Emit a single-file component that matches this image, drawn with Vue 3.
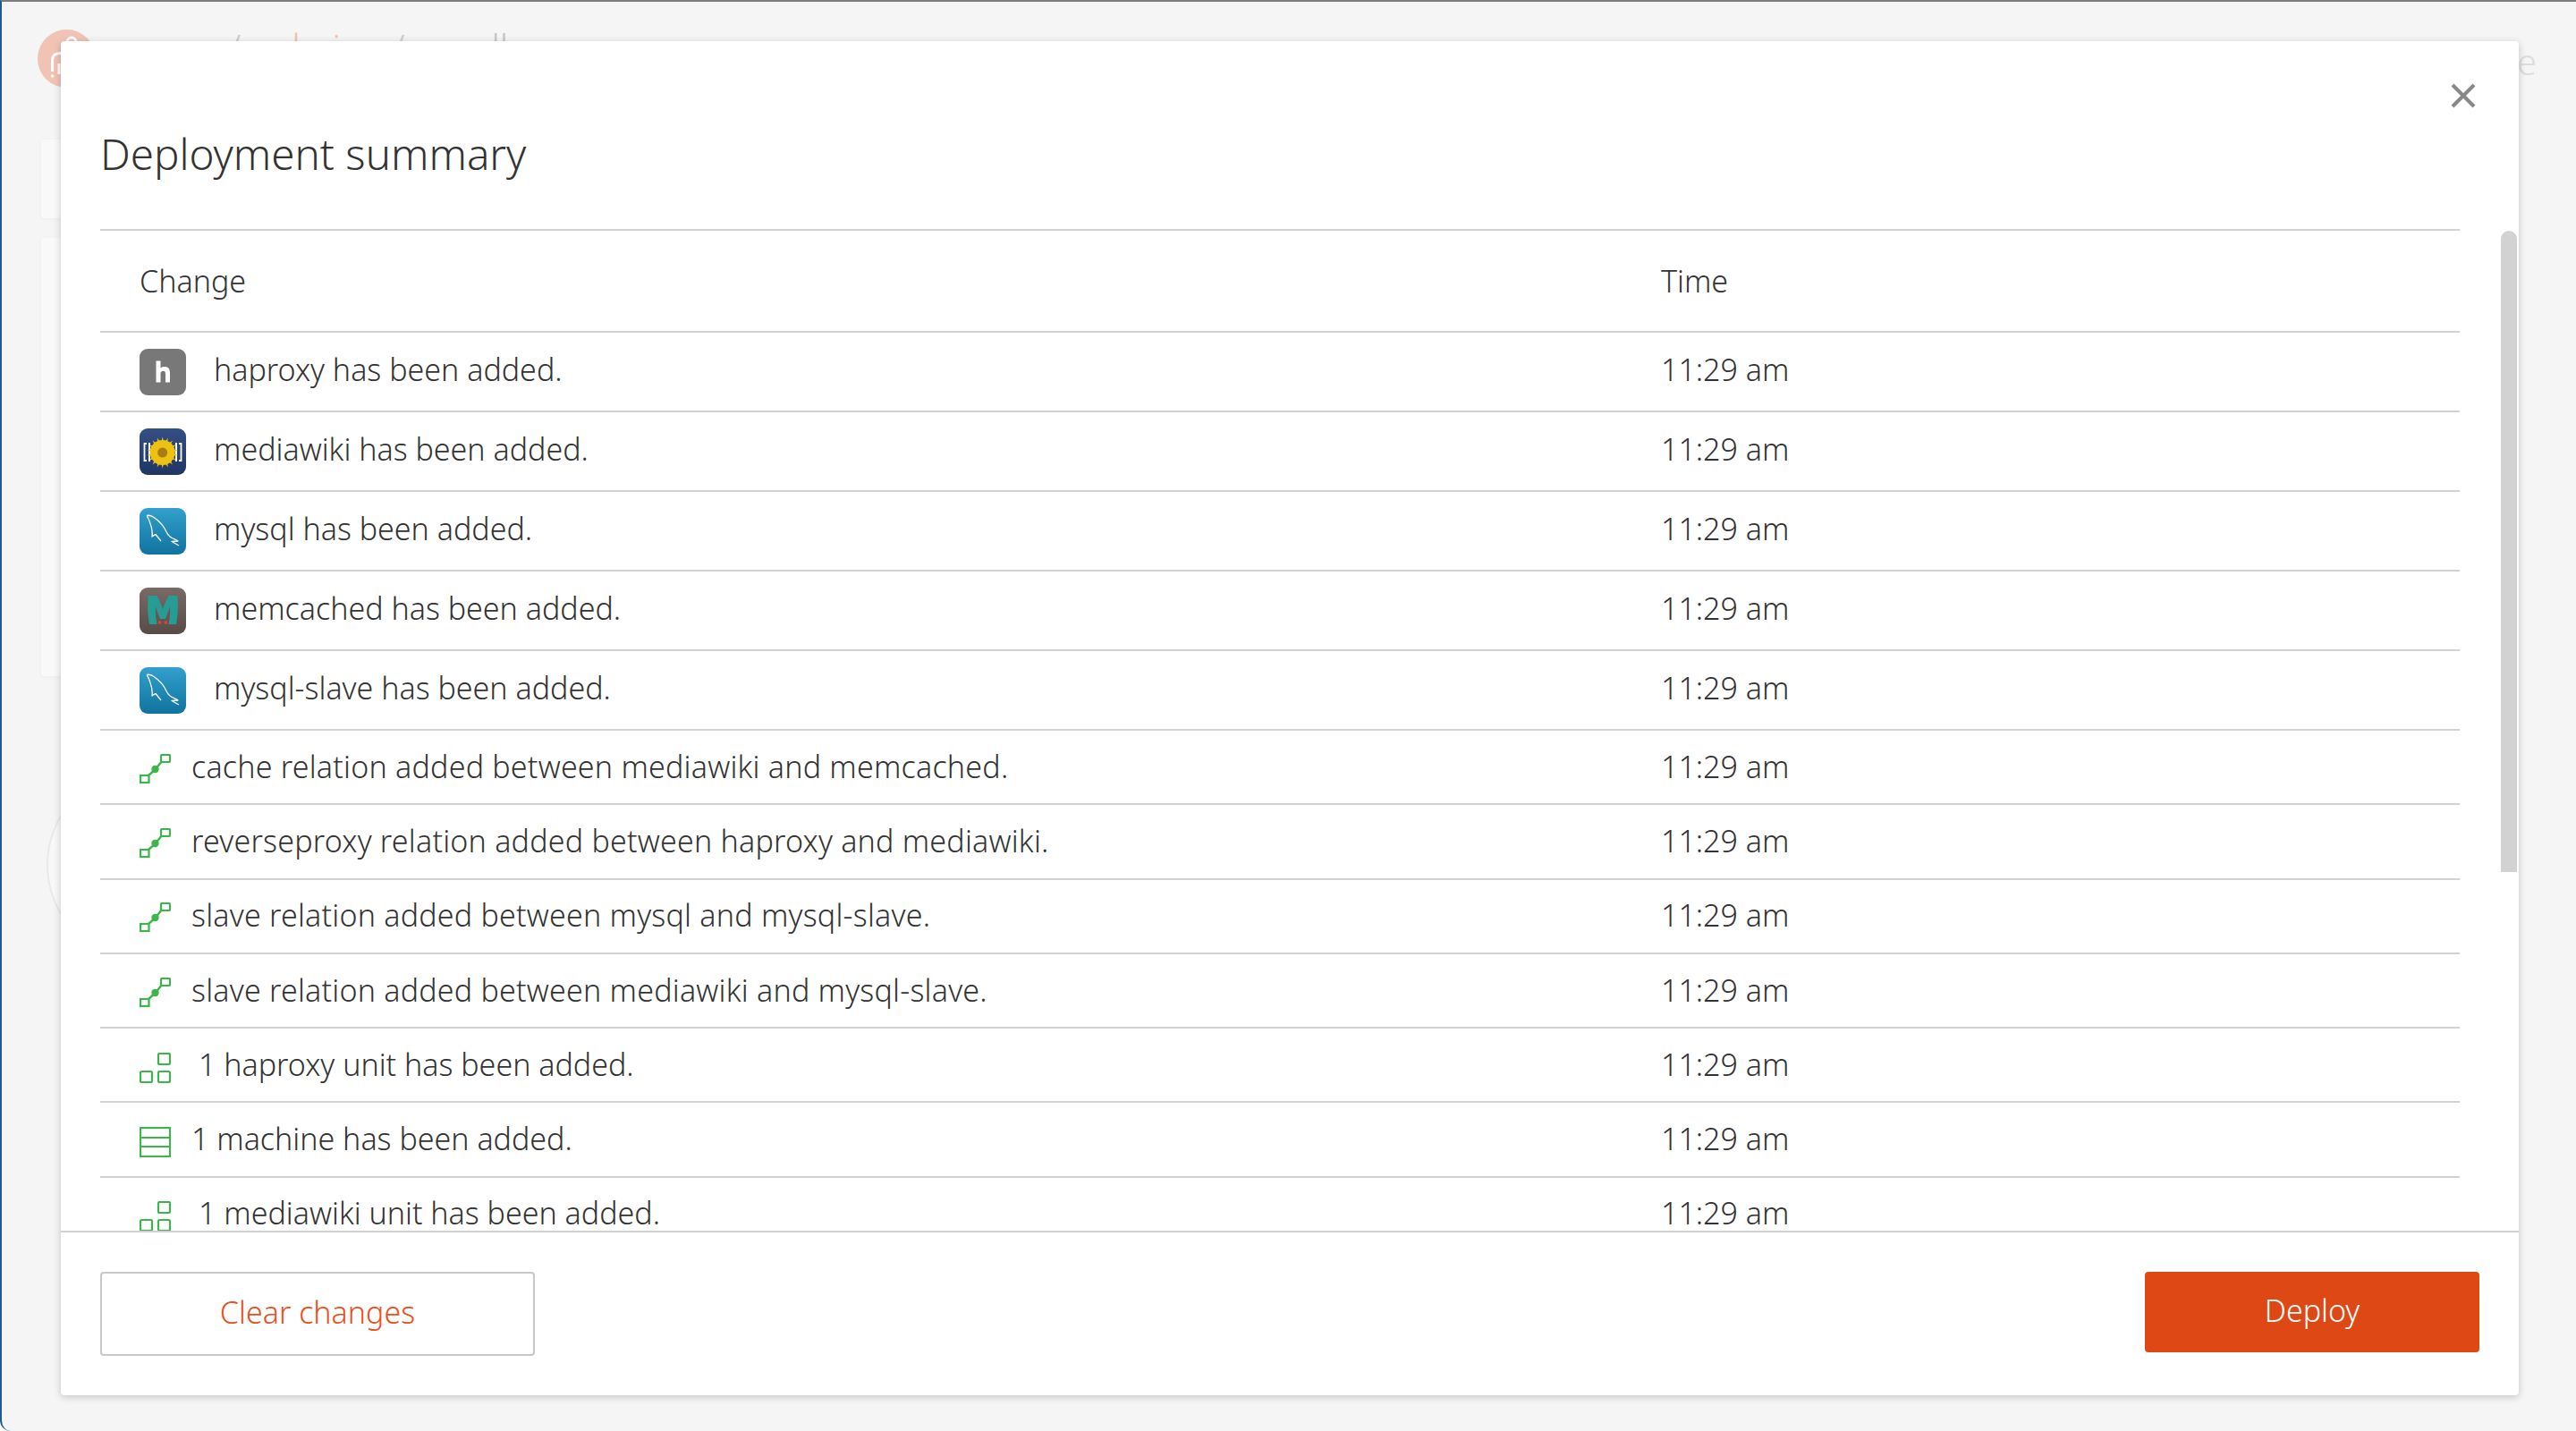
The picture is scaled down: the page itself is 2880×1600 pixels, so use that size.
<script setup>
const serviceRows = [
  { icon: 'haproxy', text: 'haproxy has been added.' },
  { icon: 'mediawiki', text: 'mediawiki has been added.' },
  { icon: 'mysql', text: 'mysql has been added.' },
  { icon: 'memcached', text: 'memcached has been added.' },
  { icon: 'mysql', text: 'mysql-slave has been added.' },
]
const changeRows = [
  { icon: 'relation', text: 'cache relation added between mediawiki and memcached.' },
  { icon: 'relation', text: 'reverseproxy relation added between haproxy and mediawiki.' },
  { icon: 'relation', text: 'slave relation added between mysql and mysql-slave.' },
  { icon: 'relation', text: 'slave relation added between mediawiki and mysql-slave.' },
  { icon: 'unit', text: '1 haproxy unit has been added.' },
  { icon: 'machine', text: '1 machine has been added.' },
  { icon: 'unit', text: '1 mediawiki unit has been added.' },
]
const petals = Array.from({ length: 18 }, (_, i) => i * 20)
</script>

<template>
  <div class="page">
    <div class="backdrop">
      <div class="top-bar">
        <svg class="logo" width="65" height="65" viewBox="0 0 65 65">
          <circle cx="32.5" cy="32.5" r="32.5" fill="#f0c3b5"/>
          <circle cx="38" cy="14" r="5" fill="none" stroke="#fff" stroke-width="3"/>
          <path d="M16.5 47 V34 C16.5 29 20 26.500 26 26.500 M24 38 V50" fill="none" stroke="#fff" stroke-width="3"/>
          <circle cx="16.500" cy="52" r="1.800" fill="#fff"/>
        </svg>
        <div class="crumbs">
          <span class="pink">www</span><span class="slash">/</span><span class="pink">admin</span><span class="slash">/</span><span class="grey">small</span>
        </div>
        <div class="top-right">More</div>
      </div>
      <div class="side-card small"></div>
      <div class="side-card large"></div>
      <div class="side-round"></div>
    </div>

    <section class="modal">
      <button class="close" aria-label="Close">
        <svg width="28" height="28" viewBox="0 0 28 28"><path d="M2 2 L26 26 M26 2 L2 26" stroke="#888" stroke-width="4" fill="none"/></svg>
      </button>
      <h2 class="title">Deployment summary</h2>
      <div class="body">
        <div class="table">
          <div class="row head"><div class="cell">Change</div><div class="time">Time</div></div>
          <div v-for="r in serviceRows" :key="r.text" class="row service">
            <div class="cell">
              <svg class="svc" viewBox="0 0 52 52" width="52" height="52">
                <defs>
                  <linearGradient id="gm" x1="0" y1="0" x2="0" y2="1"><stop offset="0" stop-color="#344f87"/><stop offset="1" stop-color="#1f3564"/></linearGradient>
                  <linearGradient id="gs" x1="0" y1="0" x2="0" y2="1"><stop offset="0" stop-color="#32a0cd"/><stop offset="1" stop-color="#10739f"/></linearGradient>
                  <linearGradient id="gc" x1="0" y1="0" x2="0" y2="1"><stop offset="0" stop-color="#7a6a66"/><stop offset="1" stop-color="#574b48"/></linearGradient>
                </defs>
                <template v-if="r.icon === 'haproxy'">
                  <rect width="52" height="52" rx="9" fill="#787878"/>
                  <path d="M18.500 13.500 H23.500 V21.500 C25 20.300 26.500 20 28 20 C32 20 34 22.500 34 27 V37.500 H29 V28 C29 25.800 28.200 24.800 26.500 24.800 C25 24.800 23.500 25.800 23.500 27.500 V37.500 H18.500 Z" fill="#fff"/>
                </template>
                <template v-else-if="r.icon === 'mediawiki'">
                  <rect width="52" height="52" rx="9" fill="url(#gm)"/>
                  <path d="M8 17 H5.500 V36 H8 M44 17 H46.500 V36 H44" stroke="#fff" stroke-width="1.800" fill="none"/>
                  <path d="M12 17 H11 V36 H12 M40 17 H41 V36 H40" stroke="#fff" stroke-width="2" fill="none"/>
                  <g fill="#f1c50f"><path v-for="a in petals" :key="a" d="M22 24 L25.700 9.500 L29.500 24 Z" :transform="`rotate(${a} 25.700 27)`"/></g>
                  <circle cx="25.700" cy="27" r="14" fill="#eec212"/>
                  <circle cx="25.700" cy="27" r="5.500" fill="#a97c14"/>
                </template>
                <template v-else-if="r.icon === 'mysql'">
                  <rect width="52" height="52" rx="9" fill="url(#gs)"/>
                  <path d="M8.300 8.300 C11 8 14 9 16 10.500 C21 14 25 18 27.500 22 C30 26 31 30 34 32 C36.500 34 40 35 43 37 L36 37.500 L44 42 M8.300 8.300 C9 11 11 13 11.500 16 C13 20 15 25 14 32 C15.500 30.500 17 30 18 29.500 C20 32 22 34.500 24 37" stroke="#fff" stroke-width="1.300" fill="none" stroke-linejoin="round"/>
                </template>
                <template v-else>
                  <rect width="52" height="52" rx="9" fill="url(#gc)"/>
                  <path d="M9.700 9 H19.500 C22 14 24.500 19 26 24 C27.500 19 30 14 32.500 9 H42.300 C43.300 20 43 30 41 41 H32.500 C34 33 34.500 27 34 21 C32 27 30.500 31 29 35 H23 C21.500 31 20 27 18 21 C17.500 27 18 33 19.500 41 H11 C9 30 8.700 20 9.700 9 Z" fill="#279c94"/>
                  <circle cx="22.500" cy="39" r="1.900" fill="#d94040"/><circle cx="29.500" cy="39" r="1.900" fill="#d94040"/>
                </template>
              </svg>
              <span class="label">{{ r.text }}</span>
            </div>
            <div class="time lift">11:29 am</div>
          </div>
          <div v-for="r in changeRows" :key="r.text" class="row change">
            <div class="cell">
              <svg v-if="r.icon === 'relation'" class="chg rel" viewBox="0 0 35 34" width="35" height="34">
                <rect x="1" y="24" width="9.500" height="8" fill="none" stroke="#3cb54a" stroke-width="2.200"/>
                <rect x="24" y="1" width="10" height="8" rx="1" fill="none" stroke="#3cb54a" stroke-width="2.200"/>
                <path d="M10 24 L17.500 17.500 L25 8" stroke="#3cb54a" stroke-width="2.400" fill="none"/>
                <circle cx="17.500" cy="17" r="4.200" fill="#3cb54a"/>
              </svg>
              <svg v-else-if="r.icon === 'unit'" class="chg unit" viewBox="0 0 35 34" width="35" height="34">
                <g fill="none" stroke="#3cb54a" stroke-width="2.200">
                  <rect x="21" y="1" width="13" height="12" rx="1.500"/>
                  <rect x="1" y="21" width="13" height="12" rx="1.500"/>
                  <rect x="21" y="21" width="13" height="12" rx="1.500"/>
                </g>
              </svg>
              <svg v-else class="chg mach" viewBox="0 0 35 34" width="35" height="34">
                <g fill="none" stroke="#3cb54a" stroke-width="2.200">
                  <rect x="1" y="1" width="33" height="32"/>
                  <path d="M1 12 H34 M1 22 H34"/>
                </g>
              </svg>
              <span class="label" :class="{ wide: r.icon === 'relation' }">{{ r.text }}</span>
            </div>
            <div class="time lift">11:29 am</div>
          </div>
        </div>
        <div class="scrollbar"></div>
      </div>
      <footer class="footer">
        <button class="btn neutral">Clear changes</button>
        <button class="btn primary">Deploy</button>
      </footer>
    </section>
  </div>
</template>

<style scoped>
.page {
  position: relative;
  width: 2880px;
  height: 1600px;
  box-sizing: border-box;
  overflow: hidden;
  background: #f5f5f5;
  border-top: 2px solid #7d7d7d;
  border-left: 2px solid #23598c;
  border-bottom-left-radius: 12px;
  font-family: "Noto Sans", sans-serif;
  font-weight: 300;
  color: #333;
}
.backdrop { position: absolute; inset: 0; }
.top-bar { display: flex; align-items: center; height: 66px; margin-top: 30px; padding: 0 44px 0 40px; }
.logo { flex: none; }
.crumbs { margin-left: 26px; margin-bottom: 26px; font-size: 40px; display: flex; }
.pink { color: #f0c0b0; }
.grey { color: #c4c4c4; }
.slash { color: #ccc; margin: 0 21px 0 34px; }
.top-right { margin-left: auto; margin-top: 6px; font-size: 40px; color: #ddd; }
.side-card { background: #f9f9f9; margin-left: 44px; width: 60px; border-radius: 4px; box-shadow: 0 1px 4px rgba(0,0,0,.04); }
.side-card.small { height: 88px; margin-top: 58px; }
.side-card.large { height: 490px; margin-top: 22px; }
.side-round { width: 214px; height: 214px; box-sizing: border-box; margin: 104px 0 0 50px; border: 2px solid #e9e9e9; border-radius: 50%; background: #f8f8f8; }

.modal {
  position: absolute;
  left: 66px;
  top: 44px;
  width: 2748px;
  height: 1514px;
  background: #fff;
  border-radius: 4px;
  box-shadow: 0 2px 8px rgba(0,0,0,.2);
  display: flex;
  flex-direction: column;
  overflow: hidden;
}
.close {
  position: absolute;
  right: 48px;
  top: 47px;
  padding: 0;
  border: 0;
  background: none;
  line-height: 0;
}
.title {
  margin: 0;
  height: 210px;
  flex: none;
  box-sizing: border-box;
  padding: 95px 0 0 44px;
  font-size: 47.500px;
  line-height: 62px;
  font-weight: 300;
}
.body { position: relative; flex: 1; min-height: 0; overflow: hidden; }
.table { margin: 0 66px 0 44px; border-top: 2px solid #d2d2d2; }
.row {
  display: flex;
  align-items: center;
  box-sizing: border-box;
  padding-left: 44px;
  border-bottom: 2px solid #d2d2d2;
  font-size: 34px;
}
.row.head { height: 114px; }
.row.service { height: 89px; }
.row.change { height: 83.300px; }
.cell { flex: none; width: 1701px; display: flex; align-items: center; }
.time { flex: none; }
.service .label, .service .lift { padding-bottom: 6px; }
.change .label, .change .lift { padding-bottom: 2px; }
.wide { letter-spacing: .22px; }
.svc { margin-right: 31px; flex: none; }
.chg { flex: none; }
.rel { margin-right: 23px; margin-top: 4px; }
.unit { margin-right: 31px; margin-top: 6px; }
.mach { margin-right: 23px; margin-top: 5px; }
.scrollbar {
  position: absolute;
  left: 2728px;
  top: 2px;
  width: 18px;
  height: 717px;
  background: #d2d2d2;
  border-radius: 9px 9px 0 0;
}
.footer {
  flex: none;
  height: 184px;
  box-sizing: border-box;
  border-top: 2px solid #d2d2d2;
  padding: 44px 44px 0;
  display: flex;
  justify-content: space-between;
  align-items: flex-start;
}
.btn {
  font: inherit;
  font-size: 34px;
  border-radius: 4px;
  cursor: pointer;
  padding: 0 0 4px;
}
.neutral {
  width: 486px;
  height: 94px;
  color: #e9501c;
  background: #fff;
  border: 2px solid #c8c8c8;
}
.primary {
  width: 374px;
  height: 90px;
  color: #fff;
  background: #dd4814;
  border: 0;
}
</style>
